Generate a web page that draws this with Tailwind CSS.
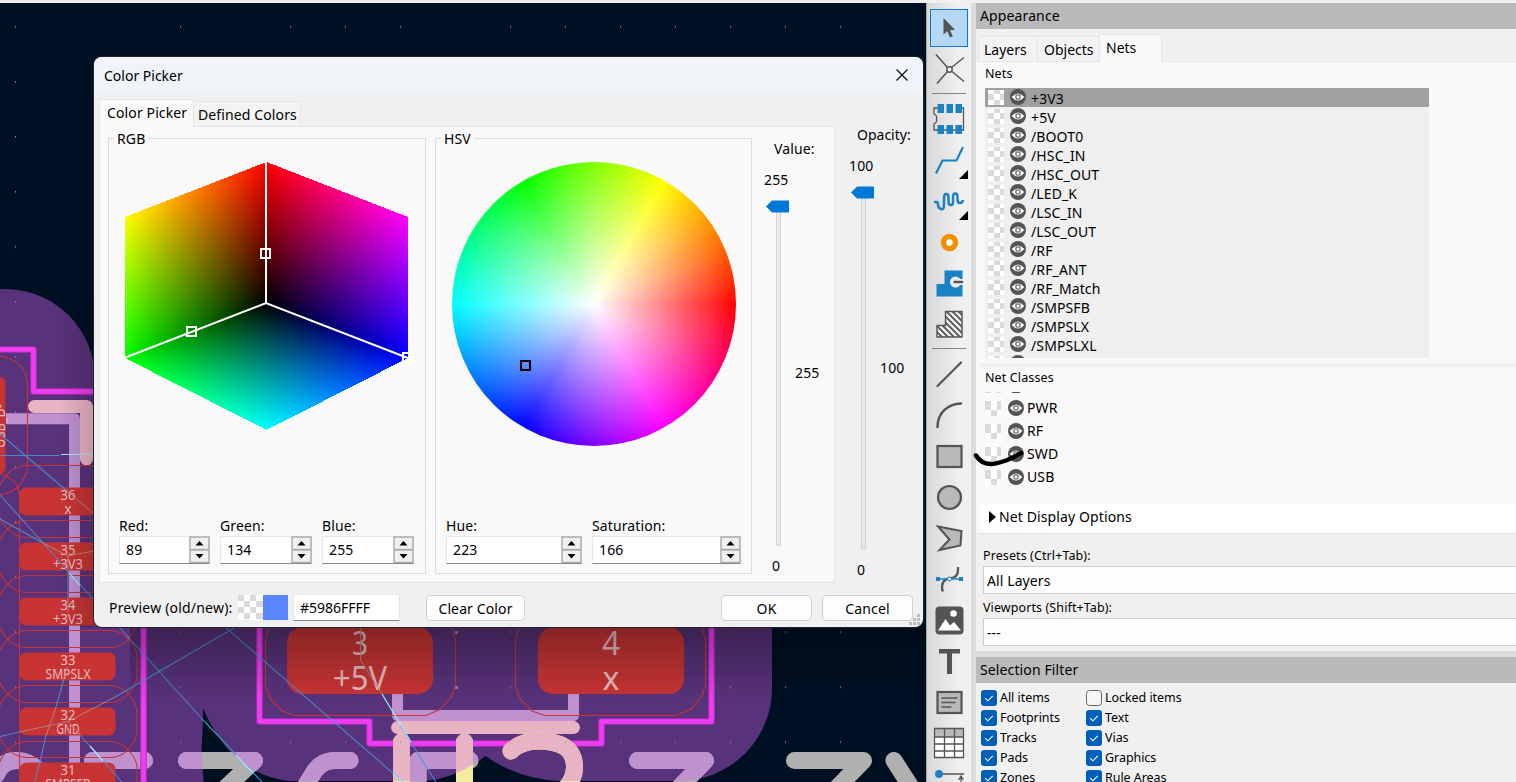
<!DOCTYPE html>
<html lang="en">
<head>
<meta charset="utf-8">
<title>Color Picker</title>
<script src="https://cdn.jsdelivr.net/npm/@tailwindcss/browser@4"></script>
</head>
<body class="w-[1516px] h-[782px] overflow-hidden bg-[#f0f0f0] text-black font-['Noto_Sans',sans-serif] text-[14px] leading-5 tracking-[0.12px] whitespace-nowrap">
<svg width="0" height="0" class="absolute">
  <defs>
    <symbol id="eye" viewBox="0 0 16 16"><circle cx="8" cy="8" r="8" fill="#545454"/><path d="M1.600 8Q8 .8 14.400 8Q8 15.200 1.600 8z" fill="#fff"/><rect x="6" y="6" width="4" height="4" rx=".8" fill="#fff" stroke="#545454" stroke-width="1.100"/></symbol>
    <symbol id="sw" viewBox="0 0 16 15"><path fill="#fff" d="M0 0h16v15H0z"/><path fill="#dadada" d="M6 0h6v4H6zM0 4h6v6H0zM12 4h4v6h-4zM6 10h6v5H6z"/></symbol>
    <symbol id="sw2" viewBox="0 0 16 15"><path fill="#fff" d="M0 0h16v15H0z"/><path fill="#dadada" d="M0 0h6v9H0zM12 0h4v9h-4zM6 9h6v6H6z"/></symbol>
    <symbol id="chk" viewBox="0 0 16 16"><rect width="16" height="16" rx="3" fill="#005fb8"/><path d="M4.200 8.200l2.600 2.600 5-5" fill="none" stroke="#fff" stroke-width="1.100"/></symbol>
    <symbol id="spin" viewBox="0 0 21 27"><path d="M1 1h19v12.500H1zM1 14h19v12.500H1z" fill="#f0f0f0" stroke="#adadad" stroke-width="1.500"/><path d="M6.500 9.500l4-4.500 4 4.500zM6.500 18l4 4.500 4-4.500z" fill="#000"/></symbol>
  </defs>
</svg>
<div class="flex flex-col w-[1516px] h-[782px]">
<div class="h-[3px] shrink-0 bg-[#f0f0f0]"></div>
<div class="flex h-[779px]">

<!-- board canvas -->
<main class="relative w-[926px] h-[779px] shrink-0 overflow-hidden bg-[#001023]">
<svg class="block tracking-normal" width="926" height="779" viewBox="0 3 926 779" font-family="Noto Sans" fill="none">
  <defs>
    <path id="zone" d="M0 289H5A90 90 0 0 1 95 379V560H772V688A93 93 0 0 1 679 781H560Q518 779 485.500 756Q455 779 425 781H290Q232 776 203 708Q203 725 201.500 750L203.500 782H0z"/>
    <clipPath id="zc"><use href="#zone"/></clipPath>
    <pattern id="dots" x="15" y="26" width="55" height="55.030" patternUnits="userSpaceOnUse"><rect width="1" height="1.500" fill="#8c8c94"/></pattern>
    <g id="silk" stroke-width="17" stroke-linecap="round" stroke-linejoin="round">
      <path d="M-4 775Q2 760 18 760.500Q30 761 40 772M92.500 760.500H144.500M186.500 760.500H254.500L218 795M350 760.500H334Q321 761 314 772L298 798M418 760.500H470M418 760.500V790M637.500 760.500H705.500L672 795M794.500 760.500H863.500L830 795M894 760.500L918 798"/>
    </g>
    <g id="mask" stroke-width="17" stroke-linecap="round" stroke-linejoin="round">
      <path d="M401.500 742V790M464.500 742V790M511 751Q521 741 538 741Q574 741 574.500 766Q575 780 562 792"/>
    </g>
    <linearGradient id="sh" x2="0" y2="1"><stop stop-color="#000" stop-opacity=".32"/><stop offset="1" stop-color="#000" stop-opacity="0"/></linearGradient>
    <linearGradient id="shl"><stop stop-color="#000" stop-opacity="0"/><stop offset="1" stop-color="#000" stop-opacity=".16"/></linearGradient>
  </defs>
  <use href="#zone" fill="#58327a"/>
  <use href="#silk" stroke="#b0b0b0"/>
  <g clip-path="url(#zc)"><use href="#silk" stroke="#bf91cf"/></g>
  <path d="M6 418.700H74.500V790M397.500 690V715.500H573.500V690" stroke="#bf91cf" stroke-width="11" stroke-linejoin="round"/>
  <path d="M34.500 406.500H86.500V459M397.500 727.500H573.500" stroke="#e8b4c4" stroke-width="13" stroke-linecap="round" stroke-linejoin="round"/>
  <g stroke-linejoin="round">
    <path d="M0 349.500H33.500V391.500H100M143.500 600V790M259.500 600V721.500H369.500V743.500H601.500V721.500H711.500V600" stroke="#b52cc4" stroke-width="6.500"/>
    <path d="M0 349.500H33.500V391.500H100M143.500 600V790M259.500 600V721.500H369.500V743.500H601.500V721.500H711.500V600" stroke="#f23cf0" stroke-width="4.500"/>
  </g>
  <use href="#mask" stroke="#f2ec9c"/>
  <g clip-path="url(#zc)"><use href="#mask" stroke="#e8b4c4"/></g>
  <rect width="926" height="782" fill="url(#dots)"/>
  <path d="M455 631h3v3h-3zM455 686h3v3h-3z" fill="#9a78b4"/>
  <g fill="#c83434">
    <rect x="-20" y="377" width="25.500" height="97" rx="6"/>
    <rect x="19.500" y="487.500" width="96" height="28" rx="7"/><rect x="19.500" y="542.500" width="96" height="28" rx="7"/><rect x="19.500" y="597.500" width="96" height="28" rx="7"/><rect x="19.500" y="652.500" width="96" height="28" rx="7"/><rect x="19.500" y="707.500" width="96" height="28" rx="7"/><rect x="19.500" y="762.500" width="96" height="28" rx="7"/>
    <rect x="287" y="627.500" width="146" height="66.500" rx="15"/><rect x="538" y="627.500" width="146" height="66.500" rx="15"/>
  </g>
  <g stroke="#c4343a" stroke-width="1.100">
    <path d="M0 356Q14 358 22 368Q27.500 376 27.500 386V463Q27 478 18 487Q10 494 0 494.500M19.500 490V782M0 474Q15 478 18 488Q21 497 19.500 505"/>
    <path id="court" d="M25 465.500H112Q124 467 130 476Q137 484 137 492V511Q137 519 130 527Q124 536 112 537.500H25Q13 536 6 527Q-1 519-2 511V492Q-1 484 6 476Q13 467 25 465.500z"/>
    <use href="#court" y="55"/><use href="#court" y="110"/><use href="#court" y="165"/><use href="#court" y="220"/><use href="#court" y="276"/>
    <path d="M269 627L265.500 640V687L271 700L282 711L295 715.500H426L441 709L452 696L455.500 685V640L452 627M519 627L515.500 640V687L521 700L532 711L545 715.500H676L691 709L702 696L705.500 685V640L702 627"/>
  </g>
  <g fill="#e9bcc0" text-anchor="middle" font-size="14">
    <text x="68" y="499.500" textLength="15" lengthAdjust="spacingAndGlyphs">36</text><text x="68" y="514">x</text>
    <text x="68" y="554.500" textLength="15" lengthAdjust="spacingAndGlyphs">35</text><text x="68" y="569" textLength="30" lengthAdjust="spacingAndGlyphs">+3V3</text>
    <text x="68" y="609.500" textLength="15" lengthAdjust="spacingAndGlyphs">34</text><text x="68" y="624" textLength="30" lengthAdjust="spacingAndGlyphs">+3V3</text>
    <text x="68" y="664.500" textLength="15" lengthAdjust="spacingAndGlyphs">33</text><text x="68" y="679" textLength="45" lengthAdjust="spacingAndGlyphs">SMPSLX</text>
    <text x="68" y="719.500" textLength="15" lengthAdjust="spacingAndGlyphs">32</text><text x="68" y="734" textLength="23" lengthAdjust="spacingAndGlyphs">GND</text>
    <text x="68" y="774.500" textLength="15" lengthAdjust="spacingAndGlyphs">31</text><text x="68" y="789" textLength="45" lengthAdjust="spacingAndGlyphs">SMPSFB</text>
    <text x="360" y="655" font-size="32" textLength="16" lengthAdjust="spacingAndGlyphs">3</text><text x="360" y="689.500" font-size="32" textLength="54" lengthAdjust="spacingAndGlyphs">+5V</text>
    <text x="611" y="655" font-size="32" textLength="18" lengthAdjust="spacingAndGlyphs">4</text><text x="611" y="689.500" font-size="32">x</text>
    <text transform="translate(5 426) rotate(-90)" textLength="44" lengthAdjust="spacingAndGlyphs">USB_D-</text>
  </g>
  <g stroke="#4a90d4" stroke-width="1.100" opacity=".9">
    <path d="M0 455.500H60M0 434L67 491M0 495L45 545L68 571L93 599L120 628L203 720L262 782M0 519L43 543M68 571V597M0 736.500L19.500 732M115 697L235 627.500M63 682L56 707M46 736L35 782M80 735L122 782M225 627L403 782M400 725L436 782"/>
  </g>
  <path d="M67 491L94 514M43 543L68 556L94 551M68 556V571M68 597V612M19.500 732L68 721.500L115 697M67 667L63 682M56 707L46 736M68 721.500L80 735M360.500 627V660L382 694" stroke="#b88888" opacity=".9"/>
  <path d="M203 720L230 748" stroke="#2aa6ac"/>
  <path d="M61 454.500L94 454M69 573L80 585M236 755L253 773M382 694L411 742M393 774L403 782M90 746L103 761" stroke="#a0eeff" stroke-width="1.200"/>
  <path d="M130 627H926V700H130z" fill="url(#sh)"/>
  <path d="M60 300H94V627H60z" fill="url(#shl)"/>
</svg>

<!-- dialog -->
<section class="absolute left-[94px] top-[54px] w-[829px] h-[570px] rounded-lg bg-[#f0f0f0] overflow-hidden flex flex-col shadow-[0_0_0_1px_#1c2430]">
  <header class="h-[37px] shrink-0 bg-[#eff4f8] flex items-center justify-between pl-[10px] pr-[15px] tracking-normal">
    <span>Color Picker</span>
    <svg width="12" height="12" viewBox="0 0 12 12" class="-mt-px"><path d="M.500 .500l11 11M11.500 .500l-11 11" stroke="#111" stroke-width="1.300"/></svg>
  </header>
  <div class="flex h-[489px] shrink-0">
    <div class="ml-[5px] w-[735px]">
      <div class="flex items-end h-[32px] pt-[5px]">
        <div class="relative z-10 h-[28px] -mb-px w-[95px] border border-b-0 border-[#e5e5e5] bg-[#f9f9f9] pl-[7px] leading-[25px]">Color Picker</div>
        <div class="h-[25px] w-[107px] border border-l-0 border-b-0 border-[#e5e5e5] bg-[#f3f3f3] pl-[4px] leading-[26px]">Defined Colors</div>
      </div>
      <div class="w-[736px] h-[457px] border border-[#e5e5e5] bg-[#f9f9f9] pl-[8px] pt-[11px] flex">
        <!-- RGB -->
        <fieldset class="relative w-[317px] h-[436px] border border-[#dcdcdc]">
          <div class="absolute left-[5px] -top-[10px] bg-[#f9f9f9] px-[3px] leading-5">RGB</div>
          <canvas id="cube" width="317" height="300" class="block -ml-px -mt-px"></canvas>
          <div class="flex mt-[78px] pl-[10px]">
            <label class="w-[101px]">Red:<span class="flex w-[91px] h-[28px] bg-white border border-[#e6e6e6] border-b-[#858585] justify-between pl-[6px] leading-[26px]">89<svg width="21" height="27" class="-mr-px -mt-px"><use href="#spin"/></svg></span></label>
            <label class="w-[102px]">Green:<span class="flex w-[92px] h-[28px] bg-white border border-[#e6e6e6] border-b-[#858585] justify-between pl-[6px] leading-[26px]">134<svg width="21" height="27" class="-mr-px -mt-px"><use href="#spin"/></svg></span></label>
            <label>Blue:<span class="flex w-[92px] h-[28px] bg-white border border-[#e6e6e6] border-b-[#858585] justify-between pl-[6px] leading-[26px]">255<svg width="21" height="27" class="-mr-px -mt-px"><use href="#spin"/></svg></span></label>
          </div>
        </fieldset>
        <!-- HSV -->
        <fieldset class="relative ml-[10px] w-[317px] h-[436px] -left-px border border-[#dcdcdc]">
          <div class="absolute left-[5px] -top-[10px] bg-[#f9f9f9] px-[3px] leading-5">HSV</div>
          <div class="relative ml-[15.5px] mt-[22.5px] w-[284px] h-[284px] rounded-full bg-[radial-gradient(circle_closest-side,#fff,rgb(255_255_255/0)),conic-gradient(from_90deg,#f00,#f0f,#00f,#0ff,#0f0,#ff0,#f00)]">
            <div class="absolute left-[68.5px] top-[198.5px] size-[11px] border-2 border-black"></div>
          </div>
          <div class="flex mt-[70.5px] pl-[10px]">
            <label class="w-[146px]">Hue:<span class="flex w-[136px] h-[28px] bg-white border border-[#e6e6e6] border-b-[#858585] justify-between pl-[6px] leading-[26px]">223<svg width="21" height="27" class="-mr-px -mt-px"><use href="#spin"/></svg></span></label>
            <label>Saturation:<span class="flex w-[149px] h-[28px] bg-white border border-[#e6e6e6] border-b-[#858585] justify-between pl-[6px] leading-[26px]">166<svg width="21" height="27" class="-mr-px -mt-px"><use href="#spin"/></svg></span></label>
          </div>
        </fieldset>
        <!-- Value slider -->
        <div class="relative pl-[11px] pt-px">
          <div class="pl-[10px]">Value:</div>
          <div class="mt-[11px]">255</div>
          <svg width="26" height="360" viewBox="0 0 26 360" class="block mt-[9px]"><rect x="12.500" y="8" width="4" height="338" fill="#e7eaea" stroke="#d2d4d4"/><path d="M2 7.500L8 1.500H25V13.500H8z" fill="#0078d7"/></svg>
          <div class="-mt-[3px] pl-[8px]">0</div>
          <div class="absolute left-[42px] top-[225px]">255</div>
        </div>
      </div>
    </div>
    <!-- Opacity slider -->
    <div class="relative ml-[15px] pt-[31px]">
      <div class="pl-[8px] tracking-normal">Opacity:</div>
      <div class="mt-[11px]">100</div>
      <svg width="26" height="366" viewBox="0 0 26 366" class="block mt-[9px]"><rect x="12.500" y="8" width="4" height="356" fill="#e7eaea" stroke="#d2d4d4"/><path d="M2 7.500L8 1.500H25V13.500H8z" fill="#0078d7"/></svg>
      <div class="mt-[9px] pl-[8px]">0</div>
      <div class="absolute left-[31px] top-[264px]">100</div>
    </div>
  </div>
  <footer class="relative flex items-center h-[44px] pt-[5px] pl-[15px]">
    <span class="w-[129px] tracking-[0.2px]">Preview (old/new):</span>
    <svg width="25" height="25" viewBox="0 0 25 25"><path fill="#fff" d="M0 0h25v25H0z"/><path fill="#dadada" d="M0 0h6v6H0zM12 0h6v6h-6zM6 6h6v6H6zM18 6h7v6h-7zM0 12h6v6H0zM12 12h6v6h-6zM6 18h6v6H6zM18 18h7v6h-7z"/></svg>
    <div class="size-[25px] bg-[#5986ff]"></div>
    <div class="ml-[5px] w-[107px] h-[27px] bg-white border border-[#e6e6e6] border-b-[#858585] pl-[6px] leading-[25px] tracking-normal">#5986FFFF</div>
    <div class="ml-[26px] w-[99px] h-[26px] rounded border border-[#d0d0d0] bg-[#fdfdfd] text-center leading-[25px]">Clear Color</div>
    <div class="ml-[196px] w-[91px] h-[26px] rounded border border-[#d0d0d0] bg-[#fdfdfd] text-center leading-[25px]">OK</div>
    <div class="ml-[10px] w-[91px] h-[26px] rounded border border-[#d0d0d0] bg-[#fdfdfd] text-center leading-[25px]">Cancel</div>
    <svg width="11" height="11" class="absolute right-[3px] bottom-[2px]" fill="#bdbdbd"><path d="M8 0h3v3H8zM4 4h3v3H4zM8 4h3v3H8zM0 8h3v3H0zM4 8h3v3H4zM8 8h3v3H8z"/></svg>
  </footer>
</section>
</main>

<!-- toolbar -->
<nav class="w-[45px] shrink-0 h-[779px] overflow-hidden border-l border-[#a9a9a9] bg-[linear-gradient(90deg,#d8d8d8,#f0f0f0_75%)] pl-[3px] pt-[6px]">
<div class="flex flex-col gap-[3px] fill-none">
  <svg width="38" height="38" viewBox="0 0 38 38" class="shrink-0"><rect x=".5" y=".5" width="37" height="37" fill="#b4d8f5" stroke="#0078d7"/><path d="M13.500 9V25.500L17.300 22.300L20 28.500L22.800 27.300L20.100 21.200L25 20.800z" fill="#545454"/></svg>
  <svg width="38" height="38" viewBox="0 0 38 38" class="shrink-0" stroke="#545454" stroke-width="1.500"><path d="M6 4.500L17.500 17.500M34 7.500L21.500 17.500M17.500 21.500L7 33.500M22 21.500L34 31.500"/><circle cx="19.500" cy="19.500" r="2.700" fill="#fff"/></svg>
  <div class="h-[6px] pt-[2px] shrink-0"><div class="h-px w-[34px] ml-[2px] bg-[#858585]"></div></div>
  <svg width="38" height="38" viewBox="0.500 0 38 38" class="shrink-0"><path d="M8 8H4.500V14Q8 15.500 7 19Q8 22 4.500 24V30H34V8H30" stroke="#545454" stroke-width="1.300"/><path d="M8 4h6.500v9H8zM17 4h6.500v9H17zM26 4h6.500v9H26zM8 25h6.500v9H8zM17 25h6.500v9H17zM26 25h6.500v9H26z" fill="#1a81c4"/></svg>
  <svg width="38" height="38" viewBox="0 0 38 38" class="shrink-0"><path d="M6 32.500L12.500 19.500H26.500L33 6" stroke="#1a81c4" stroke-width="2.200"/><path d="M38 29v9h-9z" fill="#000"/></svg>
  <svg width="38" height="38" viewBox="0 0 38 38" class="shrink-0"><path d="M4 20H6.500Q8 20 8 23T11 27T14 23V16Q14 12 16.300 12T18.500 15.500V20Q18.500 23 20.800 23T23 20V15.500Q23 11.500 25.300 11.500T27.500 15V18Q27.500 21 30 21T33 18" stroke="#1a81c4" stroke-width="2.500"/><path d="M38 29v9h-9z" fill="#000"/></svg>
  <svg width="38" height="38" viewBox="0 0 38 38" class="shrink-0"><circle cx="19.500" cy="19.500" r="6" fill="#fff" stroke="#ee9000" stroke-width="5.500"/></svg>
  <svg width="38" height="38" viewBox="0 0 38 38" class="shrink-0"><path d="M14.500 6.500H32.500V32.500H6.500V20H14.500z" fill="#1a81c4"/><circle cx="25.500" cy="18" r="5.500" fill="#eee"/><path d="M25 18H33" stroke="#eee" stroke-width="6"/><path d="M24.500 18H32" stroke="#545454" stroke-width="2.500" stroke-linecap="round"/></svg>
  <svg width="38" height="38" viewBox="0 0 38 38" class="shrink-0"><defs><clipPath id="ko"><path d="M15.500 6.500H32V32H7V20.500H15.500z"/></clipPath></defs><path d="M15.500 6.500H32V32H7V20.500H15.500z" fill="#eee"/><path clip-path="url(#ko)" d="M0 8L30 38M0 14L30 44M0 20L20 40M5 7L35 37M10 6L40 36M15 5L45 35M21 5L45 29M27 5L45 23" stroke="#545454" stroke-width="1.800"/><path d="M15.500 6.500H32V32H7V20.500H15.500z" stroke="#545454" stroke-width="1.400"/></svg>
  <div class="h-[6px] pt-[2px] shrink-0"><div class="h-px w-[34px] ml-[2px] bg-[#858585]"></div></div>
  <svg width="38" height="38" viewBox="0.500 0 38 38" class="shrink-0"><path d="M8 31L31.500 7.500" stroke="#545454" stroke-width="2.200" stroke-linecap="round"/></svg>
  <svg width="38" height="38" viewBox="0.500 0 38 38" class="shrink-0"><path d="M8 31C8 17 18 8 31.500 7.500" stroke="#545454" stroke-width="2.400" stroke-linecap="round"/></svg>
  <svg width="38" height="38" viewBox="0.500 0 38 38" class="shrink-0"><rect x="8" y="9" width="24" height="21" fill="#b9b9b9" stroke="#545454" stroke-width="2.200"/></svg>
  <svg width="38" height="38" viewBox="0 0 38 38" class="shrink-0"><circle cx="19.500" cy="19.500" r="11.500" fill="#b9b9b9" stroke="#545454" stroke-width="2.200"/></svg>
  <svg width="38" height="38" viewBox="0 0 38 38" class="shrink-0"><path d="M8 7.500L31.500 12L30.500 26.500L9.500 31L19.500 20.500z" fill="#b9b9b9" stroke="#545454" stroke-width="2"/></svg>
  <svg width="38" height="38" viewBox="0 0 38 38" class="shrink-0"><path d="M28 7V10Q28 18 19.500 18.500Q12 19.500 12 27Q12 30 13 31.500" stroke="#545454" stroke-width="2.300"/><path d="M6 19H32.500" stroke="#1a81c4" stroke-width="1.500"/><path d="M6 17h4v4H6zM29 17h4v4h-4z" fill="#1a81c4"/><circle cx="19.500" cy="19" r="2" fill="#fff" stroke="#1a81c4"/></svg>
  <svg width="38" height="38" viewBox="0 0 38 38" class="shrink-0"><rect x="5.500" y="5.500" width="28" height="28" rx="4" fill="#545454"/><path d="M8 29.500L15.500 18L20 24.500L24 21L31 29.500z" fill="#fff"/><circle cx="23.500" cy="12.500" r="3.300" fill="#fff"/></svg>
  <svg width="38" height="38" viewBox="0 0 38 38" class="shrink-0"><path d="M9 7H30V11.500H22V32H17V11.500H9z" fill="#545454"/></svg>
  <svg width="38" height="38" viewBox="0.500 0 38 38" class="shrink-0"><rect x="8" y="9" width="24" height="21" fill="#b9b9b9" stroke="#545454" stroke-width="2.200"/><path d="M12 15H28M12 19.500H26M12 24H22" stroke="#545454" stroke-width="1.600"/></svg>
  <svg width="38" height="38" viewBox="0.500 0 38 38" class="shrink-0"><rect x="5" y="5" width="29" height="29" fill="#fff"/><path d="M5 5H34V13H5z" fill="#b9b9b9"/><path d="M5 4.500H34V33.500H5zM5 13H34M5 20H34M5 27H34M15 5V34M25 5V34" stroke="#545454" stroke-width="1.300"/></svg>
  <svg width="38" height="38" viewBox="0 0 38 38" class="shrink-0"><path d="M9 9H34M31 12V30M28.500 15L31 11L33.500 15" stroke="#545454" stroke-width="1.300"/><circle cx="9" cy="9" r="4" fill="#1a81c4"/></svg>
</div>
</nav>
<div class="w-[5px] shrink-0 bg-[#dcdcdc]"></div>

<!-- side panel -->
<aside class="relative w-[540px] h-[779px] overflow-hidden flex flex-col bg-[#f0f0f0]">
  <div class="h-[26px] shrink-0 bg-[#bababa] pl-[4px] leading-[26px]">Appearance</div>
  <div class="flex items-end h-[32px] shrink-0 pl-[2px] tracking-normal">
    <div class="h-[25px] w-[60px] border border-b-0 border-[#e5e5e5] bg-[#f3f3f3] pl-[5px] leading-[26px]">Layers</div>
    <div class="h-[25px] w-[61px] border border-x-0 border-b-0 border-[#e5e5e5] bg-[#f3f3f3] pl-[6px] leading-[26px]">Objects</div>
    <div class="relative z-10 h-[28px] -mb-px w-[63px] border border-b-0 border-[#e5e5e5] bg-[#f9f9f9] pl-[6px] leading-[25px]">Nets</div>
  </div>
  <div class="h-[472px] shrink-0 bg-[#f9f9f9] border-t border-[#e5e5e5]">
    <div class="h-[26px] pl-[9px] leading-[23px] text-[12.5px]">Nets</div>
    <div id="nets" class="ml-[9px] w-[444px] h-[270px] overflow-hidden bg-[#efefef]"></div>
    <div class="mt-[5px] ml-[4px] h-[4px] bg-[#f0f0f0]"></div>
    <div class="h-[25px] pl-[9px] leading-[21px] text-[12.5px]">Net Classes</div>
    <div class="h-[5px] pl-[9px] flex"><svg width="16" height="1"><path d="M0 0h6v1H0zM12 0h4v1h-4z" fill="#dadada"/></svg><svg width="8" height="1" class="ml-[11px]"><path d="M0 0h8v1H0z" fill="#545454"/></svg></div>
    <div id="classes" class="pl-[9px]"></div>
    <div class="mt-[15px] ml-[4px] h-[26px] bg-white pl-[9px] flex items-center"><svg width="7" height="12" class="mr-[3px]"><path d="M0 0L7 6L0 12z"/></svg>Net Display Options</div>
  </div>
  <div class="pl-[7px] pt-[12px] border-t border-[#e5e5e5] text-[12.5px] h-[118px] shrink-0 tracking-[0.1px]">
    <div class="leading-5">Presets (Ctrl+Tab):</div>
    <div class="h-[28px] border border-r-0 border-[#cfcfcf] bg-[#fdfdfd] pl-[3px] text-[14px] leading-[27px]">All Layers</div>
    <div class="leading-5 mt-[4px]">Viewports (Shift+Tab):</div>
    <div class="h-[28px] border border-r-0 border-[#cfcfcf] bg-[#fdfdfd] pl-[3px] text-[14px] leading-[27px]">---</div>
  </div>
  <div class="h-[6px] shrink-0 bg-[#dcdcdc]"></div>
  <div class="h-[26px] shrink-0 bg-[#bababa] pl-[4px] leading-[26px]">Selection Filter</div>
  <div class="grid grid-cols-[105px_200px] auto-rows-[20px] pl-[5px] pt-[5px] text-[12.5px] leading-5 tracking-[-0.05px]">
    <div class="flex items-center gap-[3px]"><svg width="16" height="16"><use href="#chk"/></svg>All items</div>
    <div class="flex items-center gap-[3px]"><svg width="16" height="16"><rect x=".5" y=".5" width="15" height="15" rx="3" fill="#f6f6f6" stroke="#666"/></svg>Locked items</div>
    <div class="flex items-center gap-[3px]"><svg width="16" height="16"><use href="#chk"/></svg>Footprints</div>
    <div class="flex items-center gap-[3px]"><svg width="16" height="16"><use href="#chk"/></svg>Text</div>
    <div class="flex items-center gap-[3px]"><svg width="16" height="16"><use href="#chk"/></svg>Tracks</div>
    <div class="flex items-center gap-[3px]"><svg width="16" height="16"><use href="#chk"/></svg>Vias</div>
    <div class="flex items-center gap-[3px]"><svg width="16" height="16"><use href="#chk"/></svg>Pads</div>
    <div class="flex items-center gap-[3px]"><svg width="16" height="16"><use href="#chk"/></svg>Graphics</div>
    <div class="flex items-center gap-[3px]"><svg width="16" height="16"><use href="#chk"/></svg>Zones</div>
    <div class="flex items-center gap-[3px]"><svg width="16" height="16"><use href="#chk"/></svg>Rule Areas</div>
  </div>
</aside>
</div>
</div>
<!-- freehand pen mark -->
<svg class="absolute left-[970px] top-[445px] z-20" width="60" height="26" fill="none"><path d="M6 10.500C14 23 26 19 36 15.500C42 13 46 11 51 8" stroke="#000" stroke-width="4.500" stroke-linecap="round"/></svg>
<script>
const nets = ['+3V3','+5V','/BOOT0','/HSC_IN','/HSC_OUT','/LED_K','/LSC_IN','/LSC_OUT','/RF','/RF_ANT','/RF_Match','/SMPSFB','/SMPSLX','/SMPSLXL',''];
document.getElementById('nets').innerHTML = nets.map((n, i) =>
  `<div class="flex h-[19px] pl-[3px] ${i ? '' : 'bg-[#a0a0a0]'}"><svg width="16" height="15" class="mt-[2px]"><use href="#sw"/></svg><svg width="16" height="16" class="ml-[6px] mt-px"><use href="#eye"/></svg><span class="ml-[5px] leading-[21px]">${n}</span></div>`).join('');
document.getElementById('classes').innerHTML = ['PWR','RF','SWD','USB'].map(n =>
  `<div class="flex items-center h-[23px]"><svg width="16" height="15"><use href="#sw2"/></svg><svg width="16" height="16" class="ml-[7px] -mt-px"><use href="#eye"/></svg><span class="ml-[3px] -mt-px">${n}</span></div>`).join('');

// RGB cube: three faces meeting at black
const cv = document.getElementById('cube'), g = cv.getContext('2d'), im = g.createImageData(317, 300);
const cx = 158, cy = 164.5, S = 141.5, D = 55, H = 141;
for (let y = 0; y < 300; y++) for (let x = 0; x < 317; x++) {
  const dx = x - cx, dy = y - cy, a = Math.abs(dx) / S;
  if (a > 1) continue;
  let r = 0, gr = 0, b = 0;
  const up = (a * D - dy) / H;
  if (up >= 0) {
    if (up > 1) continue;
    r = up; if (dx < 0) gr = a; else b = a;
  } else {
    const K = 17, B = 2 * D + K * a, C = D * a - dy;
    const u = (-B + Math.sqrt(B * B - 4 * K * C)) / (2 * K), v = u + a;
    if (v > 1) continue;
    if (dx < 0) { gr = v; b = u; } else { gr = u; b = v; }
  }
  const i = (y * 317 + x) * 4;
  im.data[i] = r * 255; im.data[i + 1] = gr * 255; im.data[i + 2] = b * 255; im.data[i + 3] = 255;
}
g.putImageData(im, 0, 0);
g.strokeStyle = '#fff'; g.lineWidth = 2;
g.beginPath(); g.moveTo(158, 18); g.lineTo(158, 165); g.moveTo(11, 222); g.lineTo(158, 165); g.lineTo(305, 222); g.stroke();
g.strokeRect(153, 111, 9, 9); g.strokeRect(79, 189, 9, 9); g.strokeRect(295, 215, 9, 9);
</script>
</body>
</html>
